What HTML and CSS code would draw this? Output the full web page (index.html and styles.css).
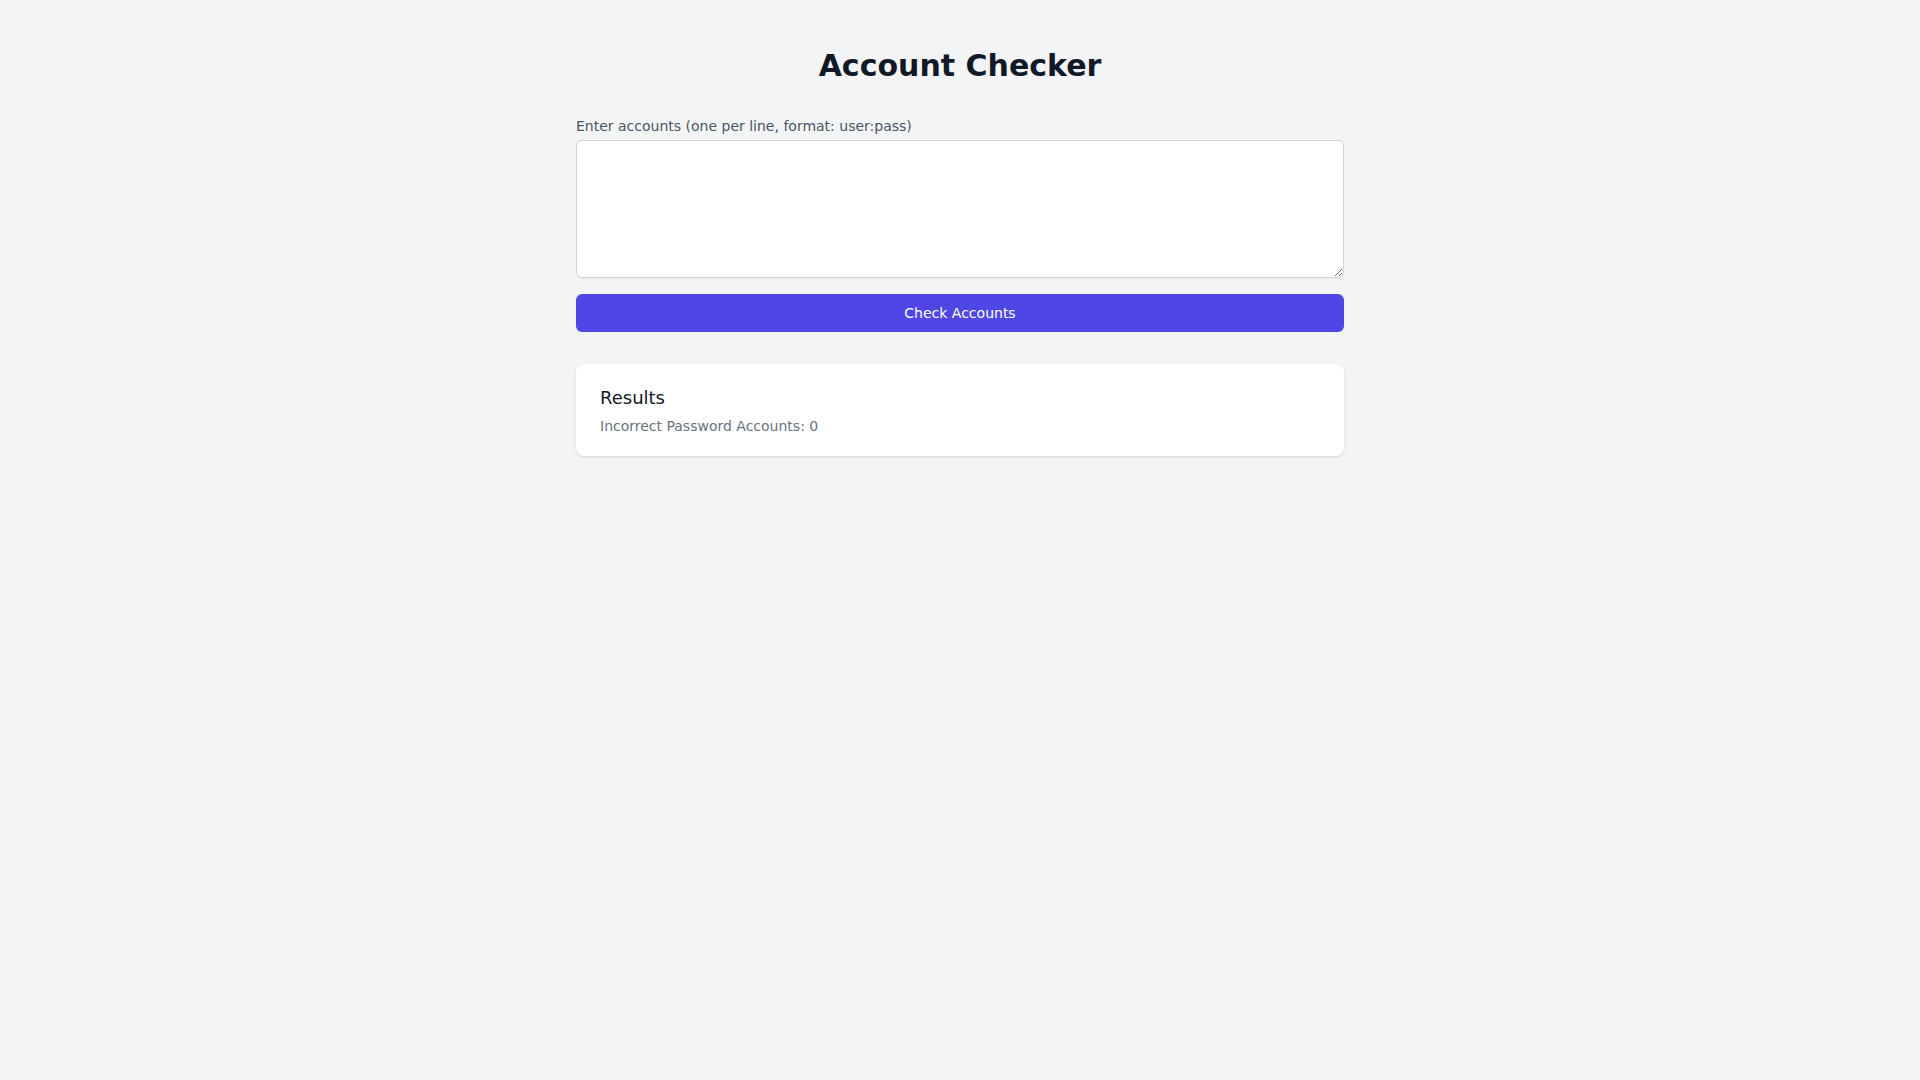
FILE: index.html
```html
<!DOCTYPE html>
<html lang="en">
<head>
<meta charset="utf-8">
<title>Account Checker</title>
<link rel="stylesheet" href="styles.css">
</head>
<body>
<main class="container">
  <h1 class="title">Account Checker</h1>
  <div class="form">
    <label class="label" for="accounts">Enter accounts (one per line, format: user:pass)</label>
    <textarea id="accounts" class="textarea" rows="5"></textarea>
    <button class="btn" type="button">Check Accounts</button>
  </div>
  <section class="card">
    <h2 class="card-title">Results</h2>
    <p class="card-text">Incorrect Password Accounts: 0</p>
  </section>
</main>
</body>
</html>
```

FILE: styles.css
```css
* { box-sizing: border-box; }
html, body { margin: 0; padding: 0; }
body {
  background: #f3f4f6;
  font-family: "DejaVu Sans", "Liberation Sans", sans-serif;
  color: #111827;
  min-height: 100vh;
}
.container {
  width: 768px;
  margin: 0 auto;
  padding-top: 48px;
}
.title {
  margin: 0 0 32px;
  font-size: 30px;
  line-height: 36px;
  font-weight: 700;
  text-align: center;
  color: #111827;
}
.form {
  display: flex;
  flex-direction: column;
}
.label {
  display: block;
  font-size: 14px;
  line-height: 20px;
  color: #4b5563;
  margin-bottom: 4px;
}
.textarea {
  display: block;
  width: 100%;
  height: 138px;
  padding: 8px;
  font-family: inherit;
  font-size: 16px;
  line-height: 24px;
  border: 1px solid #d1d5db;
  border-radius: 6px;
  background: #fff;
  box-shadow: 0 1px 2px 0 rgba(0,0,0,0.05);
  resize: vertical;
  outline: none;
}
.btn {
  margin-top: 16px;
  width: 100%;
  height: 38px;
  padding: 8px 16px;
  border: 1px solid transparent;
  border-radius: 6px;
  background: #4f46e5;
  color: #fff;
  font-family: inherit;
  font-size: 14px;
  line-height: 20px;
  cursor: pointer;
}
.card {
  margin-top: 32px;
  background: #fff;
  border-radius: 8px;
  padding: 20px 24px;
  box-shadow: 0 1px 3px 0 rgba(0,0,0,0.1), 0 1px 2px -1px rgba(0,0,0,0.1);
}
.card-title {
  margin: 0 0 4px;
  font-size: 18px;
  line-height: 28px;
  font-weight: 400;
  color: #111827;
}
.card-text {
  margin: 0;
  font-size: 14px;
  line-height: 20px;
  color: #6b7280;
}
```
